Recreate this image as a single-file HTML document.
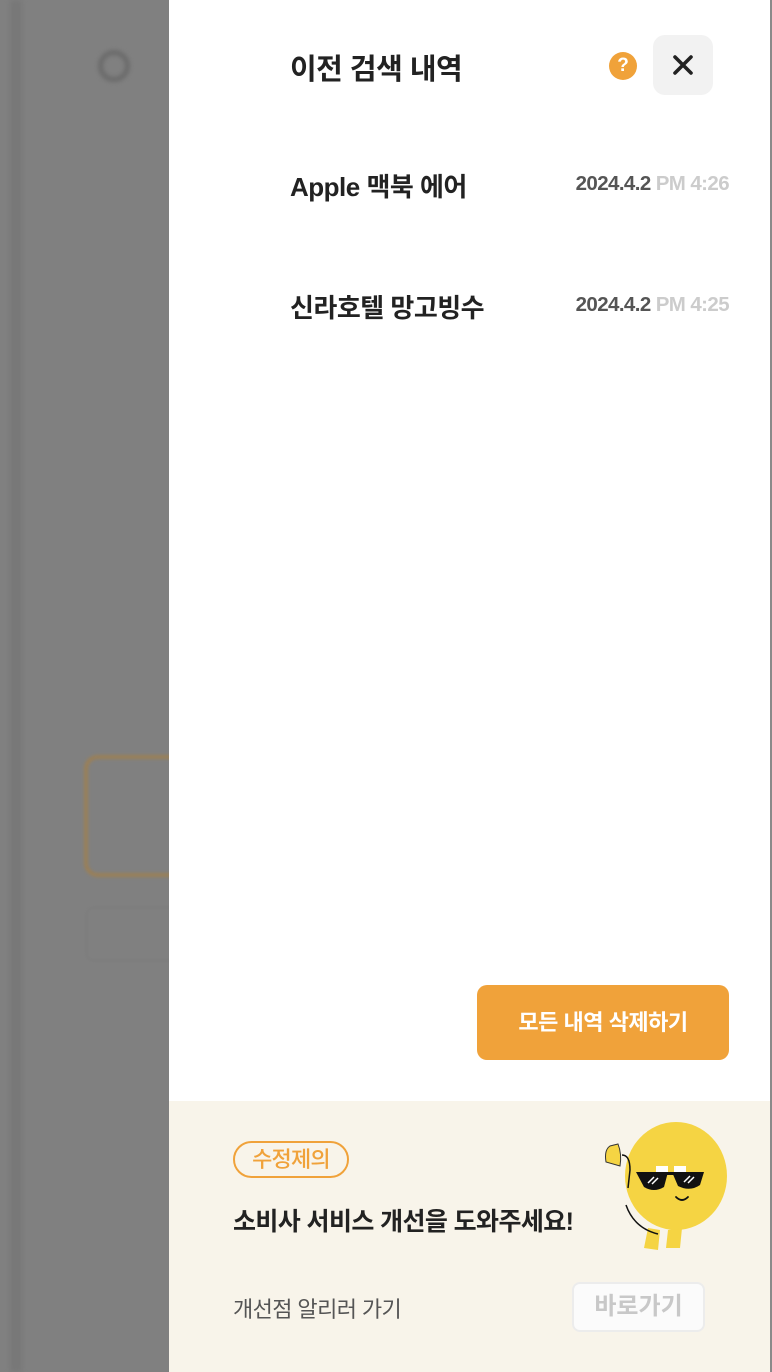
<!DOCTYPE html>
<html><head><meta charset="utf-8"><style>
*{margin:0;padding:0;box-sizing:border-box}
body{width:772px;height:1372px;position:relative;overflow:hidden;background:#808080;font-family:"Liberation Sans","Noto Sans CJK KR",sans-serif}
.abs{position:absolute}
.panel{left:169px;top:0;width:601px;height:1372px;background:#fff}
.rline{left:770px;top:0;width:2px;height:1372px;background:#8a8a8a}
.title{left:290px;top:46px;font-size:29px;font-weight:700;color:#222;letter-spacing:-0.5px}
.item{left:290px;font-size:26px;font-weight:600;color:#222;letter-spacing:-0.5px}
.date{right:43px;font-size:20.5px;font-weight:700;color:#555;letter-spacing:-0.6px}
.date span{color:#ccc}
</style></head><body>
<div class="abs" style="left:10px;top:0;width:12px;height:1372px;background:#777;filter:blur(3px)"></div>
<div class="abs" style="left:98px;top:50px;width:32px;height:32px;border-radius:50%;border:5px solid #6a6a6a;filter:blur(2px)"></div>
<div class="abs" style="left:84px;top:755px;width:120px;height:122px;border:4px solid #9b7f55;border-radius:14px;filter:blur(1.5px)"></div>
<div class="abs" style="left:86px;top:907px;width:110px;height:54px;border:1px solid #7a7a7a;border-radius:8px;filter:blur(1px)"></div>
<div class="abs panel"></div>
<div class="abs rline"></div>
<div class="abs title">이전 검색 내역</div>
<div class="abs" style="left:609px;top:52px;width:28px;height:28px;border-radius:50%;background:#f0a23a;color:#fff;font-weight:700;font-size:19px;text-align:center;line-height:28px">?</div>
<div class="abs" style="left:653px;top:35px;width:60px;height:60px;border-radius:12px;background:#f2f2f2">
<svg width="60" height="60" viewBox="0 0 60 60"><path d="M22 22L38 38M38 22L22 38" stroke="#222" stroke-width="3.6" stroke-linecap="round"/></svg></div>
<div class="abs item" style="top:167px">Apple 맥북 에어</div>
<div class="abs date" style="top:172px">2024.4.2 <span>PM 4:26</span></div>
<div class="abs item" style="top:288px">신라호텔 망고빙수</div>
<div class="abs date" style="top:293px">2024.4.2 <span>PM 4:25</span></div>
<div class="abs" style="left:477px;top:985px;width:252px;height:75px;border-radius:10px;background:#f0a23a;color:#fff;font-size:22px;font-weight:700;text-align:center;line-height:75px;letter-spacing:-0.5px">모든 내역 삭제하기</div>
<div class="abs" style="left:169px;top:1101px;width:601px;height:271px;background:#f8f4ea"></div>
<div class="abs" style="left:233px;top:1141px;width:116px;height:37px;border:2px solid #f0a23a;border-radius:19px;color:#f0a23a;font-size:22px;font-weight:500;text-align:center;line-height:33px;letter-spacing:-0.8px">수정제의</div>
<div class="abs" style="left:233px;top:1202px;font-size:25px;font-weight:600;color:#222;letter-spacing:-0.6px">소비사 서비스 개선을 도와주세요!</div>
<div class="abs" style="left:233px;top:1292px;font-size:22px;color:#555;letter-spacing:-0.6px">개선점 알리러 가기</div>
<div class="abs" style="left:572px;top:1282px;width:133px;height:50px;border:2px solid #ececec;border-radius:8px;background:#fbfbfb;color:#c8c8c8;font-size:24px;font-weight:700;text-align:center;line-height:46px">바로가기</div>
<svg class="abs" style="left:596px;top:1110px" width="140" height="150" viewBox="0 0 140 150">
<path d="M52 118 L48 138 L62 140 L64 120Z M72 120 L70 138 L84 138 L86 118Z" fill="#f5d443"/>
<ellipse cx="80" cy="66" rx="51" ry="54" fill="#f5d443"/>
<path d="M26 45 Q34 45 34 60 L32 78" stroke="#111" stroke-width="1.5" fill="none"/>
<path d="M30 95 Q38 118 62 124" stroke="#111" stroke-width="1.5" fill="none"/>
<path d="M10 52 Q8 40 14 36 L22 34 Q26 44 24 56 Z" fill="#f5d443" stroke="#333" stroke-width="1"/>
<rect x="60" y="56" width="12" height="6" fill="#fff"/><rect x="78" y="56" width="12" height="6" fill="#fff"/>
<path d="M40 62 L72 62 L68 77 Q58 83 48 77 Z M76 62 L108 62 L104 75 Q94 82 82 76 Z" fill="#111"/>
<rect x="70" y="62" width="8" height="3" fill="#111"/>
<path d="M52 73 L58 67 M56 74 L62 68 M88 72 L94 66 M92 73 L98 67" stroke="#fff" stroke-width="1.5"/>
<path d="M80 87 Q86 93 92 87" stroke="#111" stroke-width="1.8" fill="none" stroke-linecap="round"/>
</svg>
</body></html>
